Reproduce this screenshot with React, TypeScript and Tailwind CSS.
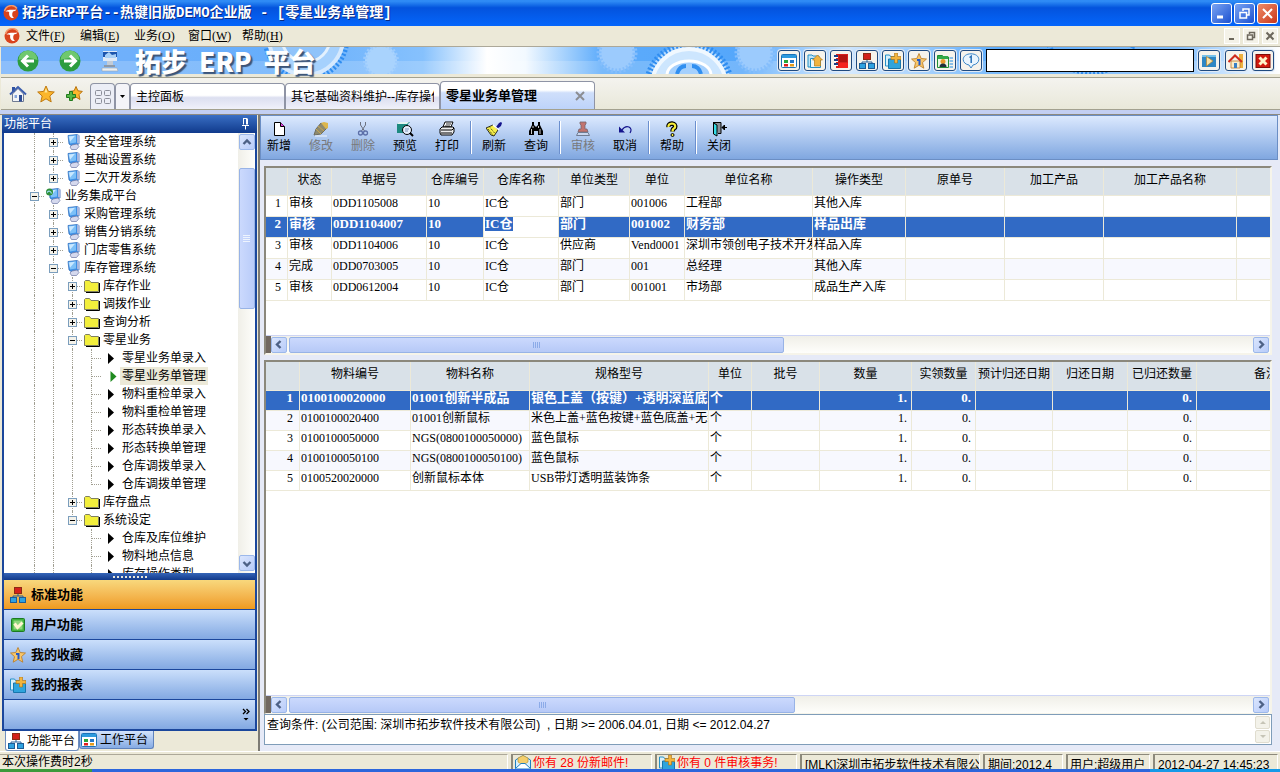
import type { ReactNode } from "react";
import clsx from "clsx";

/* ---------- icons ---------- */

const LogoIcon = () => (
  <svg width="16" height="16" viewBox="0 0 16 16">
    <circle cx="8" cy="8" r="7.5" fill="#d9431c" />
    <path d="M1.500 6a7 7 0 0 1 12.500-2.500" fill="none" stroke="#f49a6c" strokeWidth="1.500" />
    <path d="M2.500 6.500C5 4.200 8 5 13.500 4.500c-1 1.800-2.500 1.800-3.500 2C8.600 9 9 11.500 11 13c-3 .5-5.500-1.500-4.800-6-1.500-.6-2.500-.6-3.700-.5z" fill="#fff" />
  </svg>
);

const RoundArrow = ({ back = false }: { back?: boolean }) => (
  <svg width="22" height="22" viewBox="0 0 22 22">
    <circle cx="11" cy="11" r="10.5" fill="#2c9c3f" />
    <path d="M1.500 10a9.500 9.500 0 0 1 19 0q-9.500-3.500-19 0z" fill="#6fc86f" />
    <path
      d={back ? "M17 11H6M11 5.500 5.500 11l5.500 5.500" : "M5 11h11M11 5.500l5.500 5.500-5.500 5.500"}
      fill="none"
      stroke="#fff"
      strokeWidth="3"
    />
  </svg>
);

const TerminalIcon = () => (
  <svg width="18" height="22" viewBox="0 0 18 22">
    <path d="M2 1h14v10H2z" fill="#dfe9f6" />
    <path d="M2 2h14v5H2z" fill="#1d55ad" />
    <path d="M4 5l4-3 3 3 4-1v4H4z" fill="#a9d0f6" />
    <path d="M6 11h6v4H6z" fill="#c4ccd6" />
    <path d="M3 15h11v2H3z" fill="#8d99a8" />
    <path d="M1 18h15l1 3H1z" fill="#eceff2" stroke="#9aa4b0" strokeWidth=".6" />
  </svg>
);

const PanelIcon = () => (
  <svg width="16" height="16" viewBox="0 0 16 16">
    <rect x=".5" y="1.500" width="15" height="13" rx="1" fill="#fff" stroke="#1a73b8" />
    <path d="M1 2h14v3H1z" fill="#2d9ade" />
    <path d="M3 7h4v3H3z" fill="#2ba53a" />
    <path d="M9 7h4v3H9z" fill="#2477c9" />
    <path d="M3 11h4v2.500H3z" fill="#e0201b" />
    <path d="M9 11h4v2.500H9z" fill="#e49b1d" />
  </svg>
);

const FolderUpIcon = () => (
  <svg width="16" height="16" viewBox="0 0 16 16">
    <path d="M1 14V2h4l1 1h6v11z" fill="#bfe4f7" stroke="#238fc6" />
    <path d="M3.500 14.500v-9h10v9z" fill="#e9f7fd" stroke="#238fc6" />
    <path d="M10.500 2l5 5h-2v6h-6V7h-2z" fill="#f1b441" stroke="#b77b15" strokeWidth=".7" />
  </svg>
);

const NotebookIcon = () => (
  <svg width="16" height="16" viewBox="0 0 16 16">
    <path d="M3 1h12v14H3z" fill="#d8201b" />
    <path d="M6 2h8v7H6z" fill="#b3140f" />
    <path d="M6 10h9v5H6z" fill="#f5231c" />
    <path d="M1 3h4M1 7h4M1 11h4" stroke="#1b3f86" strokeWidth="2" />
    <path d="M1 4.500h4M1 8.500h4M1 12.500h4" stroke="#fff" />
  </svg>
);

const OrgIcon = () => (
  <svg width="16" height="16" viewBox="0 0 16 16">
    <path d="M8 6v3M3 12V9h10v3" fill="none" stroke="#24609b" />
    <rect x="4.500" y=".5" width="7" height="6" fill="#d3211a" stroke="#8c2b14" />
    <rect x=".5" y="10.500" width="6" height="5" fill="#2ea1e0" stroke="#1c5c96" />
    <rect x="9.500" y="10.500" width="6" height="5" fill="#2ea1e0" stroke="#1c5c96" />
  </svg>
);

const FolderPlusIcon = () => (
  <svg width="16" height="16" viewBox="0 0 16 16">
    <path d="M.5 13V2h4l1 1.500h6V13z" fill="#d8f0fb" stroke="#2490c8" />
    <path d="M3.500 15.500V6h11l1 1v8.500z" fill="#2fa4dc" stroke="#1876ad" />
    <path d="M9.500 0h3v3.500H16v3h-3.500V10h-3V6.500H6v-3h3.500z" fill="#f3b43c" stroke="#a96f12" strokeWidth=".6" />
  </svg>
);

const StarOneIcon = () => (
  <svg width="16" height="16" viewBox="0 0 16 16">
    <path d="M8 .5l2.200 5 5.300.5-4 3.600 1.300 5.600L8 12.300 3.200 15.200l1.300-5.600L.5 6l5.300-.5z" fill="#f8c66a" stroke="#b9791f" strokeWidth=".8" />
    <path d="M6 7h2.500v5" fill="none" stroke="#2358c9" strokeWidth="2" />
  </svg>
);

const ContactIcon = () => (
  <svg width="16" height="16" viewBox="0 0 16 16">
    <path d="M.5 14.500v-12h5l1 1.500h5v10.500z" fill="#e8f5e3" stroke="#1f8f35" />
    <path d="M1 3h10v3H1z" fill="#33a94a" />
    <circle cx="6" cy="8.500" r="2.500" fill="#e89a2c" />
    <path d="M2.500 14q0-3.500 3.500-3.500t3.500 3.500z" fill="#20303c" />
    <path d="M12.500 5H16M12.500 8H16M12.500 11H16M12.500 14H16" stroke="#67aee6" strokeWidth="1.500" />
  </svg>
);

const BubbleIcon = () => (
  <svg width="18" height="16" viewBox="0 0 18 16">
    <path d="M9 .8c4.500 0 7.800 2.400 7.800 5.700 0 2.900-2.600 5-5.800 5.500L9 15l-2-3c-3.200-.5-5.800-2.600-5.800-5.500C1.200 3.200 4.500.8 9 .8z" fill="#e9f5fe" stroke="#3b86c8" />
    <path d="M7.500 4.500L9.200 3.300V10" fill="none" stroke="#2b72b8" strokeWidth="1.500" />
  </svg>
);

const PlayIcon = () => (
  <svg width="16" height="16" viewBox="0 0 16 16">
    <path d="M1 2h14v12H1z" fill="#2f87c4" />
    <path d="M1 2h14v2H1z" fill="#77c2ea" />
    <path d="M5.500 3.500l6.500 4.500-6.500 5z" fill="#fbe3a8" stroke="#b98429" strokeWidth=".7" />
  </svg>
);

const HouseRoofIcon = () => (
  <svg width="16" height="16" viewBox="0 0 16 16">
    <path d="M11 1h4v14h-4z" fill="#edb13e" />
    <path d="M3 8h9v7H3z" fill="#fbeccb" stroke="#c2792a" strokeWidth=".8" />
    <path d="M.5 9L7 2.500 14 9" fill="none" stroke="#cf2b1c" strokeWidth="2" />
    <path d="M6 10h3v5H6z" fill="#3a7fc4" />
  </svg>
);

const StopIcon = () => (
  <svg width="16" height="16" viewBox="0 0 16 16">
    <rect x="1" y="1.500" width="14" height="13" fill="#d1190f" stroke="#7e0d08" />
    <path d="M4.500 4.500l7 7M11.500 4.500l-7 7" stroke="#fff3c9" strokeWidth="3" />
  </svg>
);

const HomeIcon = () => (
  <svg width="18" height="18" viewBox="0 0 18 18">
    <path d="M3 2h3v5H3z" fill="#2f51a1" />
    <path d="M3.500 9v7.500h11V9L9 3.500z" fill="#f2f4f8" stroke="#6f7a92" />
    <path d="M1 9.500L9 2l8 7.500" fill="none" stroke="#3d5fae" strokeWidth="2" />
    <path d="M10 10h3v6.500h-3z" fill="#2c4b94" />
    <path d="M5.500 10h2.500v3H5.500z" fill="#86a6dc" />
  </svg>
);

const StarIcon = () => (
  <svg width="18" height="18" viewBox="0 0 18 18">
    <path d="M9 1l2.400 5.400 5.900.6-4.500 4 1.400 5.900L9 13.800 3.800 16.900 5.200 11 .7 7l5.900-.6z" fill="#fbb62c" stroke="#c07a10" />
    <path d="M9 3l1.500 4.500H7.500z" fill="#ffe79a" />
  </svg>
);

const StarAddIcon = () => (
  <svg width="18" height="18" viewBox="0 0 18 18">
    <path d="M11 1.500l1.900 4.300 4.400.6-3.300 3.300 1 4.800-4-2.400-4 2.400 1-4.800L4.700 6.400l4.400-.6z" fill="#fbb62c" stroke="#b8720e" />
    <path d="M4.500 6.500h3v3h3v3h-3v3h-3v-3h-3v-3h3z" fill="#57b947" stroke="#207a1c" />
  </svg>
);

const TilesIcon = () => (
  <svg width="16" height="14" viewBox="0 0 16 14" fill="none" stroke="#8c8f9a">
    <rect x=".5" y=".5" width="6" height="5" rx="1" />
    <rect x="9.500" y=".5" width="6" height="5" rx="1" />
    <rect x=".5" y="8.500" width="6" height="5" rx="1" />
    <rect x="9.500" y="8.500" width="6" height="5" rx="1" />
  </svg>
);

const NewIcon = () => (
  <svg width="16" height="16" viewBox="0 0 16 16">
    <path d="M3.500 1.500h6l4 4v9h-10z" fill="#fff" stroke="#000" />
    <path d="M9.500 1.500v4h4" fill="#e23fe2" stroke="#000" />
  </svg>
);

const EditIcon = () => (
  <svg width="16" height="16" viewBox="0 0 16 16">
    <path d="M1 14L3 8l5-6 6 5-6 6z" fill="#8f8a6e" stroke="#6d6d60" />
    <path d="M8 2l3-1 4 1v5l-2 1z" fill="#dcb64c" />
    <path d="M3 8l5 5M5 5l6 5" stroke="#c9a64e" />
    <path d="M2 15h12" stroke="#f2f5fb" />
  </svg>
);

const CutIcon = () => (
  <svg width="16" height="16" viewBox="0 0 16 16" fill="none" stroke="#5c6fa8">
    <path d="M5.500 1v3l4 6M10.500 1v3L6.500 10" stroke="#6d7280" />
    <circle cx="5.500" cy="12" r="2" strokeWidth="1.300" />
    <circle cx="10.500" cy="12" r="2" strokeWidth="1.300" />
  </svg>
);

const PreviewIcon = () => (
  <svg width="18" height="16" viewBox="0 0 18 16">
    <path d="M1 3l3-2h10l-2 2v9H1z" fill="#1c8a80" />
    <path d="M3 1h10l-2 2H1z" fill="#e3f3f0" />
    <circle cx="11" cy="9" r="4.500" fill="#e4eefb" stroke="#000" />
    <path d="M9 8h4M9 10h3" stroke="#7e93b8" />
    <path d="M14 12l3 3" stroke="#000" strokeWidth="2" />
  </svg>
);

const PrintIcon = () => (
  <svg width="16" height="16" viewBox="0 0 16 16">
    <path d="M4 6l2-5h8l-2 5z" fill="#fff" stroke="#000" />
    <path d="M7 3h5M6 5h5" stroke="#000" strokeWidth=".8" />
    <path d="M1 8l2-2h11l1 1v4l-2 3H2l-1-2z" fill="#eee" stroke="#000" />
    <path d="M2 9h11M2 12h11M13 9l2-2" stroke="#000" />
  </svg>
);

const BrushIcon = () => (
  <svg width="16" height="16" viewBox="0 0 16 16">
    <path d="M10 6l3-4 2-1 1 1-1 3-4 3z" fill="#14148c" />
    <path d="M0 7l7-3 5 5-4 6-3-1z" fill="#f6ef4a" stroke="#000" strokeWidth=".8" />
    <path d="M2 8l5 6M4 6.500l5 6" stroke="#000" strokeWidth=".8" strokeDasharray="1 1" />
    <path d="M7 4l6 5" stroke="#fff" strokeWidth="1.500" />
  </svg>
);

const BinocularsIcon = () => (
  <svg width="16" height="16" viewBox="0 0 16 16">
    <path d="M4 1h2v3l2 2 2-2V1h2v3l3 6v4h-5v-4H6v4H1v-4l3-6z" fill="#000" />
    <path d="M3.500 8v5M5 5v2M12 8v5M10.500 5v2" stroke="#fff" strokeWidth=".8" />
  </svg>
);

const StampIcon = () => (
  <svg width="16" height="16" viewBox="0 0 16 16">
    <path d="M5 1h6v2l-1 1v4h2l1 3H3l1-3h2V4L5 3z" fill="#c2736e" stroke="#77656c" strokeWidth=".8" />
    <path d="M3 11.500h10l1.500 3h-13z" fill="#c9d6ee" stroke="#6f7c93" />
  </svg>
);

const UndoIcon = () => (
  <svg width="16" height="16" viewBox="0 0 16 16">
    <path d="M5 9q3-4.500 7-3 3.500 2 1 6" fill="none" stroke="#14148c" strokeWidth="1.200" />
    <path d="M2 5.500v6h6z" fill="#14148c" />
  </svg>
);

const HelpIcon = () => (
  <svg width="16" height="16" viewBox="0 0 16 16">
    <path d="M4.500 6q-.5-3 3.500-3.500 4 .5 3 4Q8.500 8 8.500 10.500" fill="none" stroke="#000" strokeWidth="4.500" />
    <path d="M4.500 6q-.5-3 3.500-3.500 4 .5 3 4Q8.500 8 8.500 10.500" fill="none" stroke="#f7ee3c" strokeWidth="2.200" />
    <circle cx="8.500" cy="14" r="1.500" fill="#f7ee3c" stroke="#000" />
  </svg>
);

const DoorIcon = () => (
  <svg width="16" height="16" viewBox="0 0 16 16">
    <path d="M2 1.500h8v11H7" fill="#8a8f98" stroke="#000" />
    <path d="M2.500 2l3.500 2v11l-3.500-2z" fill="#35dce8" stroke="#000" />
    <path d="M11 6.500h5M13.500 4v5L11 6.500z" fill="#000" stroke="#000" />
  </svg>
);

const MonitorIcon = ({ globe = false }: { globe?: boolean }) => (
  <svg width="16" height="16" viewBox="0 0 16 16">
    <path d="M3 1.500L12 .5l2 1v8.500L6 11.500 4 10z" fill="#3f8fe4" stroke="#2a67b8" strokeWidth=".7" />
    <path d="M3.500 2L11 1.200v7.300L5 9.500z" fill="#7cc0f8" />
    <path d="M4 2.500l6-.8-5 6z" fill="#c9e8ff" />
    <path d="M12 .5l2.500 1v8.500l-2.500-1z" fill="#a9b6dc" />
    <path d="M7 11l5-1 2 2.500-2.500 3H6.500L5 13z" fill="#d5d9ee" stroke="#6c75a3" strokeWidth=".7" />
    {globe && <circle cx="3.500" cy="4" r="3.500" fill="#2f8f3a" />}
    {globe && <path d="M1 4.500q3-3 4.500 1" fill="none" stroke="#9cdcf5" strokeWidth="1.200" />}
  </svg>
);

const FolderIcon = () => (
  <svg width="16" height="14" viewBox="0 0 16 14">
    <path d="M15.500 4v9.500H2" fill="none" stroke="#000" />
    <path d="M.5 12.500v-10l1-1h4l1.500 2h7.500v9z" fill="#f3ef3c" stroke="#808060" />
  </svg>
);

const PinIcon = () => (
  <svg width="9" height="12" viewBox="0 0 9 12" fill="none" stroke="#fff">
    <path d="M2.500 .5v6M2 .5h4M1 7.500h7M4.500 8v3.500" />
    <path d="M6 .5v6" strokeWidth="2" />
  </svg>
);

const CheckIcon = () => (
  <svg width="16" height="16" viewBox="0 0 16 16">
    <rect x="1.500" y="1.500" width="13" height="13" rx="1" fill="#3fb13c" stroke="#1c7a22" />
    <path d="M3.500 3.500h9v9h-9z" fill="#8fd67c" />
    <path d="M4.500 6.500l3 4 5-5" fill="none" stroke="#fff5d0" strokeWidth="3" />
  </svg>
);

const MailIcon = () => (
  <svg width="16" height="14" viewBox="0 0 16 14">
    <path d="M.5 13.500V5L8 .5 15.500 5v8.500z" fill="#d6effc" stroke="#1f7fc0" />
    <path d="M3 7V3l5-2.500L13 3v4l-5 3z" fill="#f4cf6d" stroke="#bb8b24" strokeWidth=".6" />
    <path d="M.5 13.500L6 8.500h4l5.500 5" fill="#fff" stroke="#1f7fc0" />
  </svg>
);

const Chevron = ({ dir }: { dir: "up" | "down" | "left" | "right" }) => {
  const paths = {
    up: "M1.500 6L5 2.500 8.500 6",
    down: "M1.500 3L5 6.500 8.500 3",
    left: "M6.500 1L3 4.500 6.500 8",
    right: "M3.500 1L7 4.500 3.500 8",
  };
  return (
    <svg width="10" height="9" viewBox="0 0 10 9">
      <path d={paths[dir]} fill="none" stroke="#4d6185" strokeWidth="2.400" />
    </svg>
  );
};

/* ---------- data ---------- */

const menus = [
  ["文件", "F"],
  ["编辑", "E"],
  ["业务", "O"],
  ["窗口", "W"],
  ["帮助", "H"],
];

const shortcuts = [
  { label: "面板", icon: <PanelIcon /> },
  { label: "上级目录", icon: <FolderUpIcon /> },
  { label: "通讯录", icon: <NotebookIcon /> },
  { label: "组织结构", icon: <OrgIcon /> },
  { label: "新建目录", icon: <FolderPlusIcon /> },
  { label: "收藏", icon: <StarOneIcon /> },
  { label: "联系人", icon: <ContactIcon /> },
  { label: "消息", icon: <BubbleIcon /> },
];

type Action = { label: string; icon: ReactNode; disabled?: boolean };

const actionGroups: Action[][] = [
  [
    { label: "新增", icon: <NewIcon /> },
    { label: "修改", icon: <EditIcon />, disabled: true },
    { label: "删除", icon: <CutIcon />, disabled: true },
    { label: "预览", icon: <PreviewIcon /> },
    { label: "打印", icon: <PrintIcon /> },
  ],
  [
    { label: "刷新", icon: <BrushIcon /> },
    { label: "查询", icon: <BinocularsIcon /> },
  ],
  [
    { label: "审核", icon: <StampIcon />, disabled: true },
    { label: "取消", icon: <UndoIcon /> },
  ],
  [{ label: "帮助", icon: <HelpIcon /> }],
  [{ label: "关闭", icon: <DoorIcon /> }],
];

// guides: one character per indent column, "|" draws the dotted line, a trailing "L" marks the last child
type Node = { label: string; guides: string; kind: "root" | "system" | "folder" | "leaf"; open?: boolean; active?: boolean };

const tree: Node[] = [
  { label: "安全管理系统", guides: "|", kind: "system" },
  { label: "基础设置系统", guides: "|", kind: "system" },
  { label: "二次开发系统", guides: "|L", kind: "system" },
  { label: "业务集成平台", guides: "", kind: "root", open: true },
  { label: "采购管理系统", guides: "|", kind: "system" },
  { label: "销售分销系统", guides: "|", kind: "system" },
  { label: "门店零售系统", guides: "|", kind: "system" },
  { label: "库存管理系统", guides: "|", kind: "system", open: true },
  { label: "库存作业", guides: "||", kind: "folder" },
  { label: "调拨作业", guides: "||", kind: "folder" },
  { label: "查询分析", guides: "||", kind: "folder" },
  { label: "零星业务", guides: "||", kind: "folder", open: true },
  { label: "零星业务单录入", guides: "|||", kind: "leaf" },
  { label: "零星业务单管理", guides: "|||", kind: "leaf", active: true },
  { label: "物料重检单录入", guides: "|||", kind: "leaf" },
  { label: "物料重检单管理", guides: "|||", kind: "leaf" },
  { label: "形态转换单录入", guides: "|||", kind: "leaf" },
  { label: "形态转换单管理", guides: "|||", kind: "leaf" },
  { label: "仓库调拨单录入", guides: "|||", kind: "leaf" },
  { label: "仓库调拨单管理", guides: "|||L", kind: "leaf" },
  { label: "库存盘点", guides: "||", kind: "folder" },
  { label: "系统设定", guides: "||L", kind: "folder", open: true },
  { label: "仓库及库位维护", guides: "|| ", kind: "leaf" },
  { label: "物料地点信息", guides: "|| ", kind: "leaf" },
  { label: "库存操作类型", guides: "|| ", kind: "leaf" },
];

const navItems = [
  { label: "标准功能", icon: <OrgIcon />, active: true },
  { label: "用户功能", icon: <CheckIcon /> },
  { label: "我的收藏", icon: <StarOneIcon /> },
  { label: "我的报表", icon: <FolderPlusIcon /> },
];

type Column = { title: string; width: string; right?: boolean };

const orderColumns: Column[] = [
  { title: "", width: "w-[22px]" },
  { title: "状态", width: "w-11" },
  { title: "单据号", width: "w-[95px]" },
  { title: "仓库编号", width: "w-[57px]" },
  { title: "仓库名称", width: "w-[75px]" },
  { title: "单位类型", width: "w-[71px]" },
  { title: "单位", width: "w-[55px]" },
  { title: "单位名称", width: "w-32" },
  { title: "操作类型", width: "w-[93px]" },
  { title: "原单号", width: "w-[99px]" },
  { title: "加工产品", width: "w-[99px]" },
  { title: "加工产品名称", width: "w-[133px]" },
  { title: "", width: "w-[133px]" },
];

const orders = [
  ["1", "审核", "0DD1105008", "10", "IC仓", "部门", "001006", "工程部", "其他入库", "", "", "", ""],
  ["2", "审核", "0DD1104007", "10", "IC仓", "部门", "001002", "财务部", "样品出库", "", "", "", ""],
  ["3", "审核", "0DD1104006", "10", "IC仓", "供应商", "Vend0001", "深圳市领创电子技术开发", "样品入库", "", "", "", ""],
  ["4", "完成", "0DD0703005", "10", "IC仓", "部门", "001", "总经理", "其他入库", "", "", "", ""],
  ["5", "审核", "0DD0612004", "10", "IC仓", "部门", "001001", "市场部", "成品生产入库", "", "", "", ""],
];

const itemColumns: Column[] = [
  { title: "", width: "w-[34px]" },
  { title: "物料编号", width: "w-[111px]" },
  { title: "物料名称", width: "w-[119px]" },
  { title: "规格型号", width: "w-[179px]" },
  { title: "单位", width: "w-[43px]" },
  { title: "批号", width: "w-[68px]" },
  { title: "数量", width: "w-[92px]", right: true },
  { title: "实领数量", width: "w-16", right: true },
  { title: "预计归还日期", width: "w-[77px]" },
  { title: "归还日期", width: "w-[75px]" },
  { title: "已归还数量", width: "w-[69px]", right: true },
  { title: "备注", width: "w-[139px]" },
];

const items = [
  ["1", "0100100020000", "01001创新半成品", "银色上盖（按键）+透明深蓝底+", "个", "", "1.", "0.", "", "", "0.", ""],
  ["2", "0100100020400", "01001创新鼠标", "米色上盖+蓝色按键+蓝色底盖+无线", "个", "", "1.", "0.", "", "", "0.", ""],
  ["3", "0100100050000", "NGS(0800100050000)", "蓝色鼠标", "个", "", "1.", "0.", "", "", "0.", ""],
  ["4", "0100100050100", "NGS(0800100050100)", "蓝色鼠标", "个", "", "1.", "0.", "", "", "0.", ""],
  ["5", "0100520020000", "创新鼠标本体", "USB带灯透明蓝装饰条", "个", "", "1.", "0.", "", "", "0.", ""],
];

/* ---------- pieces ---------- */

const CaptionButton = ({ label, danger, children }: { label: string; danger?: boolean; children: ReactNode }) => (
  <button
    aria-label={label}
    className={clsx(
      "flex size-[21px] items-center justify-center rounded-[3px] border border-white bg-linear-to-br",
      danger ? "from-[#ee8a66] to-[#c9341a]" : "from-[#7ba3f2] to-[#1b4fd0]",
    )}
  >
    <svg width="13" height="13" viewBox="0 0 13 13" fill="none" stroke="#fff" strokeWidth="2">
      {children}
    </svg>
  </button>
);

const ChildButton = ({ label, children }: { label: string; children: ReactNode }) => (
  <button aria-label={label} className="flex size-4 items-center justify-center border border-white bg-[#f4f2e8]">
    <svg width="10" height="10" viewBox="0 0 10 10" fill="none" stroke="#6c675c" strokeWidth="1.500">
      {children}
    </svg>
  </button>
);

const BannerButton = ({ label, children }: { label: string; children: ReactNode }) => (
  <button
    aria-label={label}
    className="flex h-[21px] w-[22px] shrink-0 items-center justify-center rounded-[3px] border border-[#1f4a80] bg-[#f6f3ec] shadow-[0_0_0_1px_#dfe9f5]"
  >
    {children}
  </button>
);

const ScrollButton = ({ dir }: { dir: "up" | "down" | "left" | "right" }) => (
  <button
    aria-label={dir}
    className="flex size-4 shrink-0 items-center justify-center rounded-[2px] border border-[#9cb8ea] bg-linear-to-br from-[#dbe6fd] to-[#b7cbf9]"
  >
    <Chevron dir={dir} />
  </button>
);

const HorizontalScroll = ({ thumb }: { thumb: string }) => (
  <div className="flex h-[18px] shrink-0 items-center border-t border-[#ced5f5] bg-linear-to-b from-[#f0efe8] to-[#fefefb] pr-px">
    <div className="h-full w-[5px] bg-[#716860]" />
    <ScrollButton dir="left" />
    <div
      className={clsx(
        "ml-0.5 flex h-4 items-center justify-center gap-px rounded-[2px] border border-[#98b3e6] bg-linear-to-b from-[#cbd9fd] to-[#b6c9f7]",
        thumb,
      )}
    >
      {[0, 1, 2, 3].map((i) => (
        <span key={i} className="h-[6px] w-px bg-[#8cabe8]" />
      ))}
    </div>
    <div className="ml-auto flex">
      <ScrollButton dir="right" />
    </div>
  </div>
);

const Banner = () => (
  <header className="relative ml-px flex h-[27px] shrink-0 items-center bg-[#79b4fa]">
    <svg className="absolute inset-0 size-full" aria-hidden="true">
      <defs>
        <linearGradient id="sky" x1="0" y1="0" x2="1" y2="0">
          <stop offset="0" stopColor="#73b0fb" />
          <stop offset=".1" stopColor="#6fb0fb" />
          <stop offset=".22" stopColor="#66aefc" />
          <stop offset=".33" stopColor="#86c1fd" />
          <stop offset=".38" stopColor="#fff" />
          <stop offset=".41" stopColor="#f2f9ff" />
          <stop offset=".47" stopColor="#5cabfb" />
          <stop offset=".58" stopColor="#55a7fb" />
          <stop offset=".66" stopColor="#cfe6fe" />
          <stop offset=".78" stopColor="#5cabfb" />
          <stop offset=".92" stopColor="#7fbdfd" />
          <stop offset="1" stopColor="#fff" />
        </linearGradient>
      </defs>
      <rect width="100%" height="27" fill="url(#sky)" />
      <rect y="14" width="100%" height="13" fill="#fff" opacity=".18" />
      <g fill="none">
        <circle cx="305" cy="-9" r="41" stroke="#2f8df0" strokeWidth="5" strokeDasharray="2 2" />
        <circle cx="305" cy="-9" r="37" fill="#a6d1fd" stroke="#d5e9fe" strokeWidth="4" />
        <circle cx="305" cy="-9" r="24" fill="#8fc3fa" stroke="#e3f1fe" strokeWidth="3" />
        <circle cx="380" cy="14" r="16" fill="#a9d3fd" stroke="#9ccbfd" strokeWidth="4" strokeDasharray="2 2" />
        <circle cx="616" cy="6" r="18" fill="#9ccbfd" stroke="#85befc" strokeWidth="5" strokeDasharray="2 2" />
        <circle cx="754" cy="6" r="18" fill="#9ccbfd" stroke="#85befc" strokeWidth="5" strokeDasharray="2 2" />
        <circle cx="688" cy="39" r="42" fill="#b5d9fd" stroke="#2f8df0" strokeWidth="6" strokeDasharray="2 2" />
        <circle cx="688" cy="39" r="37" fill="#cde6fe" stroke="#f0f8ff" strokeWidth="4" />
        <ellipse cx="688" cy="28" rx="22" ry="14" fill="#a5d0fd" stroke="#fff" strokeWidth="3" />
        <path d="M676 27q2-8 9-8M700 27q-2-8-9-8" stroke="#318ff0" strokeWidth="4" />
        <circle cx="1090" cy="-20" r="46" stroke="#2f8df0" strokeWidth="5" strokeDasharray="2 2" />
      </g>
    </svg>
    <div className="relative flex w-full items-center pr-[6px] pl-4">
      <button aria-label="后退">
        <RoundArrow back />
      </button>
      <button aria-label="前进" className="ml-5">
        <RoundArrow />
      </button>
      <span className="ml-5">
        <TerminalIcon />
      </span>
      <h1 className="ml-4 flex gap-3 text-[26px] leading-[26px] font-black whitespace-nowrap text-white [text-shadow:2px_2px_1px_#3b5478] font-['Noto_Sans_CJK_SC',sans-serif]">
        <span>拓步</span>
        <span>ERP</span>
        <span>平台</span>
      </h1>
      <div className="ml-auto flex items-center gap-1">
        {shortcuts.map((s) => (
          <BannerButton key={s.label} label={s.label}>
            {s.icon}
          </BannerButton>
        ))}
        <input aria-label="搜索" className="h-[23px] w-52 border border-black bg-white px-1 text-xs outline-none" />
        <div className="flex gap-[5px]">
          <BannerButton label="执行">
            <PlayIcon />
          </BannerButton>
          <BannerButton label="主页">
            <HouseRoofIcon />
          </BannerButton>
          <BannerButton label="退出">
            <StopIcon />
          </BannerButton>
        </div>
      </div>
    </div>
  </header>
);

const DocumentTab = ({ children }: { children: ReactNode }) => (
  <button className="h-[26px] w-[155px] rounded-t-[4px] border border-b-0 border-[#8f94a5] bg-linear-to-b from-white from-45% via-[#dcdff0] via-55% to-[#f0f1fa] px-[5px] text-left text-xs">
    <span className="block overflow-hidden whitespace-nowrap">{children}</span>
  </button>
);

const TabStrip = () => (
  <nav className="mt-[3px] ml-px flex h-[33px] shrink-0 items-end border-y border-[#a3a18f] bg-linear-to-b from-[#f4f3ef] to-[#e9e8d9]">
    <div className="flex h-full items-center gap-[10px] pr-[7px] pl-2">
      <button aria-label="首页">
        <HomeIcon />
      </button>
      <button aria-label="收藏夹">
        <StarIcon />
      </button>
      <button aria-label="添加收藏">
        <StarAddIcon />
      </button>
    </div>
    <button aria-label="平铺" className="flex h-[26px] w-[25px] items-center justify-center rounded-t-[4px] border border-b-0 border-[#8f94a5] bg-[#eceef6]">
      <TilesIcon />
    </button>
    <button aria-label="更多" className="flex h-[26px] w-[15px] items-center justify-center rounded-t-[4px] border border-b-0 border-[#8f94a5] bg-[#f4f4f8]">
      <svg width="5" height="3" viewBox="0 0 5 3">
        <path d="M0 0h5L2.500 3z" />
      </svg>
    </button>
    <DocumentTab>主控面板</DocumentTab>
    <DocumentTab>其它基础资料维护--库存操作</DocumentTab>
    <div className="flex h-7 w-[155px] items-center justify-between rounded-t-[4px] border border-b-0 border-[#8f94a5] bg-linear-to-b from-white from-30% via-[#cfdffb] via-40% to-[#bdd3fa] pr-[9px] pl-[5px]">
      <button className="text-[13px] font-bold">零星业务单管理</button>
      <button aria-label="关闭标签">
        <svg width="10" height="10" viewBox="0 0 10 10" stroke="#8b8d92" strokeWidth="2">
          <path d="M1 1l8 8M9 1L1 9" />
        </svg>
      </button>
    </div>
  </nav>
);

const Expander = ({ open }: { open?: boolean }) => (
  <svg width="9" height="9" viewBox="0 0 9 9" className="relative">
    <rect x=".5" y=".5" width="8" height="8" fill="#f4f2ea" stroke="#7b9ebd" />
    <path d={open ? "M2 4.500h5" : "M2 4.500h5M4.500 2v5"} stroke="#000" />
  </svg>
);

const TreeRow = ({ node }: { node: Node }) => {
  const leaf = node.kind === "leaf";
  const last = node.guides.endsWith("L");
  const columns = node.guides.replace("L", "").split("");
  return (
    <li className="flex h-[18px] items-stretch whitespace-nowrap">
      {columns.map((c, i) => (
        <span key={i} className="w-[19px] shrink-0 pl-[9px]">
          {c === "|" && <span className="block h-full border-l border-dotted border-[#a19f92]" />}
        </span>
      ))}
      <span className="relative flex w-[19px] shrink-0 items-center justify-center pt-px">
        <span
          className={clsx("absolute top-0 left-[9px] border-l border-dotted border-[#a19f92]", last ? "h-[10px]" : "h-full")}
        />
        <span className="absolute top-[9px] right-0 left-[9px] border-t border-dotted border-[#a19f92]" />
        {!leaf && <Expander open={node.open} />}
      </span>
      <span className="flex w-[19px] shrink-0 items-center justify-center">
        {node.kind === "root" && <MonitorIcon globe />}
        {node.kind === "system" && <MonitorIcon />}
        {node.kind === "folder" && <FolderIcon />}
        {leaf && (
          <svg width="13" height="11" viewBox="0 0 13 11">
            {node.active ? <path d="M6.500 0l6 5.500-6 5.500z" fill="#1f8a1f" /> : <path d="M4 0l6 5.500L4 11z" />}
          </svg>
        )}
      </span>
      <button className={clsx("px-0.5 text-xs leading-[18px]", node.active && "bg-[#ece9d8]")}>{node.label}</button>
    </li>
  );
};

const Sidebar = () => (
  <aside className="flex w-[258px] shrink-0 flex-col pr-px pl-0.5">
    <div className="flex min-h-0 flex-1 flex-col border-2 border-t-0 border-[#1b479c]">
      <div className="-mx-0.5 flex h-[18px] shrink-0 items-center justify-between bg-linear-to-b from-[#3a6fc4] to-[#103a8c] pr-[7px] pl-0.5 text-xs text-white">
        <h2>功能平台</h2>
        <button aria-label="固定">
          <PinIcon />
        </button>
      </div>
      <div className="flex min-h-0 flex-1 overflow-hidden bg-white">
        <ul className="min-w-0 flex-1 overflow-hidden pl-[21px]">
          {tree.map((node) => (
            <TreeRow key={node.label} node={node} />
          ))}
        </ul>
        <div className="flex w-[17px] flex-col items-center bg-linear-to-r from-[#f0efe8] to-[#fefefb] pt-px pb-0.5">
          <ScrollButton dir="up" />
          <div className="mt-[18px] mb-auto flex h-[141px] w-4 flex-col items-center justify-center gap-px rounded-[2px] border border-[#98b3e6] bg-linear-to-r from-[#cbd9fd] to-[#b9ccf9]">
            {[0, 1, 2, 3].map((i) => (
              <span key={i} className="h-px w-[7px] bg-[#eef4fe]" />
            ))}
          </div>
          <ScrollButton dir="down" />
        </div>
      </div>
      <div className="flex h-[7px] shrink-0 items-center justify-center gap-0.5 bg-linear-to-b from-[#3565b8] to-[#12398a]">
        {[0, 1, 2, 3, 4, 5, 6, 7, 8].map((i) => (
          <span key={i} className="size-0.5 bg-[#e8e6dc]" />
        ))}
      </div>
      {navItems.map((item) => (
        <button
          key={item.label}
          className={clsx(
            "flex h-[30px] shrink-0 items-center gap-[5px] border-b border-[#1b479c] bg-linear-to-b pl-[6px] text-[13px] font-bold",
            item.active ? "from-[#f8d87c] to-[#ee9a1b]" : "from-[#cbdffb] to-[#83a9e2]",
          )}
        >
          {item.icon}
          {item.label}
        </button>
      ))}
      <div className="flex h-[29px] shrink-0 items-center justify-end bg-linear-to-b from-[#cbdffb] to-[#83a9e2] pr-[5px]">
        <button aria-label="配置按钮">
          <svg width="8" height="14" viewBox="0 0 8 14">
            <path d="M1 1l2.500 2.500L1 6M4.500 1L7 3.500 4.500 6" fill="none" stroke="#000" strokeWidth="1.300" />
            <path d="M1.500 10h5L4 12.500z" />
          </svg>
        </button>
      </div>
    </div>
    <div className="flex h-5 shrink-0 items-start pl-[3px] text-xs">
      <button className="flex h-5 w-[74px] items-center gap-[3px] rounded-b-[3px] border border-t-0 border-[#6f8fbf] bg-white pl-[2px]">
        <OrgIcon />
        功能平台
      </button>
      <button className="flex h-[18px] w-[75px] items-center gap-[3px] rounded-b-[3px] border border-t-0 border-[#5f83bd] bg-linear-to-b from-[#d3e3fc] to-[#86abe3] pl-[1px]">
        <PanelIcon />
        工作平台
      </button>
    </div>
  </aside>
);

type GridProps = {
  label: string;
  columns: Column[];
  rows: string[][];
  selected: number;
  editing?: number;
  headHeight: string;
  rowHeight: string;
};

const DataGrid = ({ label, columns, rows, selected, editing, headHeight, rowHeight }: GridProps) => (
  <div className="min-h-0 flex-1 overflow-hidden bg-white">
    <table aria-label={label} className="w-px table-fixed border-separate border-spacing-0 text-xs">
      <thead>
        <tr className={clsx("bg-[#d9e1e8]", headHeight)}>
          {columns.map((c, i) => (
            <th
              key={i}
              className={clsx(
                "overflow-hidden border-r border-b border-[#ece9d8] px-0 pt-1 pb-0 text-center align-top font-normal whitespace-nowrap",
                c.width,
              )}
            >
              {c.title}
            </th>
          ))}
        </tr>
      </thead>
      <tbody>
        {rows.map((row, r) => (
          <tr
            key={row[0]}
            className={clsx(
              rowHeight,
              r === selected ? "bg-[#316ac5] text-[13px] font-bold text-white" : r % 2 === 1 ? "bg-[#f7f8fe]" : "bg-white",
            )}
          >
            {row.map((value, i) => (
              <td
                key={i}
                className={clsx(
                  "overflow-hidden border-r border-b border-[#ece9d8] py-0 align-top leading-[14px] whitespace-nowrap",
                  i === 0 && "pr-[6px] pl-0 text-right",
                  i > 0 && !columns[i].right && "pr-0 pl-px",
                  columns[i].right && "pr-1 pl-0 text-right",
                  r === selected && i === editing && "bg-white",
                )}
              >
                {r === selected && i === editing ? (
                  <input
                    aria-label={columns[i].title}
                    defaultValue={value}
                    className="block h-[14px] w-7 bg-[#316ac5] leading-[14px] text-white outline-none"
                  />
                ) : (
                  value
                )}
              </td>
            ))}
          </tr>
        ))}
      </tbody>
    </table>
  </div>
);

const Workspace = () => (
  <main className="flex min-w-0 flex-1 flex-col border-l-2 border-[#7d7b74] bg-[#e6eaf7]">
    <div role="toolbar" className="mr-0.5 flex h-[45px] shrink-0 items-center border border-[#6b8ec4] bg-linear-to-b from-[#dce9fe] to-[#80a7e0]">
      {actionGroups.map((group, g) => (
        <div key={g} className={clsx("flex gap-[6px]", g > 0 && "ml-[6px] border-l border-white pl-1 shadow-[-1px_0_0_#6b8fce]")}>
          {group.map((a) => (
            <button key={a.label} disabled={a.disabled} className="flex w-9 flex-col items-center gap-px text-xs leading-4 disabled:text-[#78797c]">
              {a.icon}
              {a.label}
            </button>
          ))}
        </div>
      ))}
    </div>

    <div className="flex min-h-0 flex-1 flex-col pt-[6px] pr-2 pb-[6px] pl-1">
      <section className="flex h-[189px] shrink-0 flex-col border-2 border-[#f6f4ea] border-t-[#8b887c] border-l-[#8b887c]">
        <DataGrid label="零星业务单" columns={orderColumns} rows={orders} selected={1} editing={4} headHeight="h-7" rowHeight="h-[21px]" />
        <HorizontalScroll thumb="w-[495px]" />
      </section>
      <section className="mt-[5px] flex min-h-0 flex-1 flex-col border-2 border-b border-[#f6f4ea] border-t-[#8b887c] border-l-[#8b887c]">
        <DataGrid label="物料明细" columns={itemColumns} rows={items} selected={0} headHeight="h-[29px]" rowHeight="h-5" />
        <HorizontalScroll thumb="w-[506px]" />
      </section>
      <div className="flex h-[31px] shrink-0 border border-[#7f9db9] bg-white">
        <textarea
          aria-label="查询条件"
          readOnly
          defaultValue="查询条件: (公司范围: 深圳市拓步软件技术有限公司)  , 日期 >= 2006.04.01, 日期 <= 2012.04.27"
          className="min-w-0 flex-1 resize-none overflow-hidden px-0.5 pt-0.5 text-xs outline-none font-['Liberation_Sans','Noto_Sans_CJK_SC',sans-serif]"
        />
        <div className="flex w-4 flex-col justify-between py-px">
          {["M2 5l3-3 3 3z", "M2 2l3 3 3-3z"].map((d, i) => (
            <button key={d} aria-label={i ? "向下" : "向上"} className="flex h-[13px] w-[15px] items-center justify-center rounded-[2px] border border-[#e0ddcf] bg-[#f3f2ea]">
              <svg width="10" height="7" viewBox="0 0 10 7">
                <path d={d} fill="#c6c4b6" />
              </svg>
            </button>
          ))}
        </div>
      </div>
    </div>
  </main>
);

const StatusCell = ({ className, children }: { className: string; children: ReactNode }) => (
  <div
    className={clsx(
      "flex h-full shrink-0 overflow-hidden border-t border-r border-l-2 border-t-[#8c897b] border-r-white border-l-[#8c897b] whitespace-nowrap",
      className,
    )}
  >
    {children}
  </div>
);

const StatusBar = () => (
  <footer className="shrink-0 border-t border-white bg-[#ece9d8] pt-0.5 text-xs font-['Liberation_Sans','Noto_Sans_CJK_SC',sans-serif]">
    <div className="flex h-[15px] gap-[3px] pr-0.5">
      <div className="min-w-0 flex-1 border-t border-r border-t-[#aca899] border-r-white pl-0.5 leading-[15px] whitespace-nowrap">
        本次操作费时2秒
      </div>
      <StatusCell className="w-[141px] items-start gap-0.5 pl-0.5 text-[#f00]">
        <MailIcon />
        你有 28 份新邮件!
      </StatusCell>
      <StatusCell className="w-[142px] items-start gap-0.5 pl-0.5 text-[#f00]">
        <FolderPlusIcon />
        你有 0 件审核事务!
      </StatusCell>
      <StatusCell className="w-[180px] pt-0.5 pl-[3px]">[MLK]深圳市拓步软件技术有限公</StatusCell>
      <StatusCell className="w-20 pt-0.5 pl-[3px]">期间:2012.4</StatusCell>
      <StatusCell className="w-[84px] pt-0.5 pl-0.5">用户:超级用户</StatusCell>
      <StatusCell className="w-[125px] pt-0.5 pl-[3px]">2012-04-27 14:45:23</StatusCell>
    </div>
    <div className="flex h-[3px]">
      <div className="w-[92px] bg-[#3c9a3c]" />
      <div className="flex-1 bg-[#2c66dc]" />
      <div className="w-[130px] bg-[#169ae8]" />
    </div>
  </footer>
);

export default function App() {
  return (
    <div className="flex h-screen min-h-[600px] flex-col overflow-hidden bg-[#ece9d8] text-xs text-black font-['Liberation_Serif','Noto_Sans_CJK_SC',serif]">
      <div className="flex h-[26px] shrink-0 items-center bg-linear-to-b from-[#2f8bf5] from-5% via-[#0453dd] via-30% to-[#0566fb] pr-0.5 pl-[3px]">
        <LogoIcon />
        <span className="ml-[3px] flex-1 overflow-hidden text-sm leading-5 font-bold whitespace-pre text-white [text-shadow:1px_1px_0_#0a2a80] font-['Liberation_Mono','Noto_Sans_CJK_SC',monospace]">
          拓步ERP平台--热键旧版DEMO企业版 - [零星业务单管理]
        </span>
        <div className="flex gap-0.5">
          <CaptionButton label="最小化">
            <path d="M2 10h6" strokeWidth="3" />
          </CaptionButton>
          <CaptionButton label="还原">
            <path d="M5 4V2h6v6H9M2 5.500h6.500V11H2z" strokeWidth="1.500" />
          </CaptionButton>
          <CaptionButton label="关闭" danger>
            <path d="M2 2l9 9M11 2l-9 9" />
          </CaptionButton>
        </div>
      </div>

      <div className="flex h-[21px] shrink-0 items-center border-b border-[#aca899] pr-0.5 pl-1">
        <LogoIcon />
        <nav className="ml-[6px] flex flex-1">
          {menus.map(([label, key]) => (
            <button key={key} className="w-[54px] text-left">
              {label}(<u>{key}</u>)
            </button>
          ))}
        </nav>
        <div className="flex gap-[3px]">
          <ChildButton label="最小化子窗口">
            <path d="M2 8h5" strokeWidth="2" />
          </ChildButton>
          <ChildButton label="还原子窗口">
            <path d="M3.500 3V1.500h5v5H7M1.500 4h5v4.500h-5z" />
          </ChildButton>
          <ChildButton label="关闭子窗口">
            <path d="M1.500 1.500l7 7M8.500 1.500l-7 7" strokeWidth="2" />
          </ChildButton>
        </div>
      </div>

      <Banner />
      <TabStrip />
      <div className="h-[5px] shrink-0 border-b border-[#8d8a80] bg-[#c3cff2]" />

      <div className="flex min-h-0 flex-1">
        <Sidebar />
        <Workspace />
      </div>
      <StatusBar />
    </div>
  );
}
